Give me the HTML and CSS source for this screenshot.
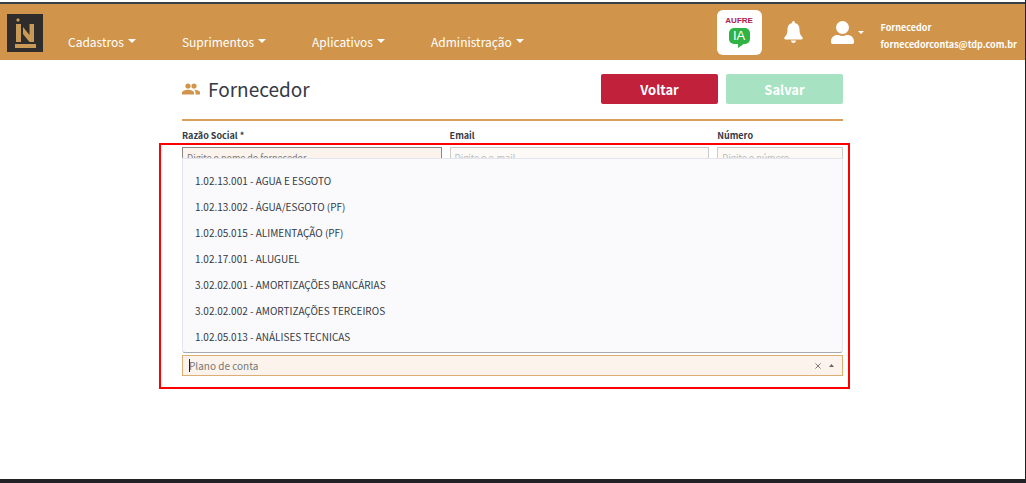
FILE: index.html
```html
<!DOCTYPE html>
<html lang="pt-BR">
<head>
  <meta charset="UTF-8">
  <meta name="viewport" content="width=device-width, initial-scale=1.0">
  <title>Fornecedor</title>
  <link rel="stylesheet" href="styles.css">
</head>
<body>
  <!-- Top navigation -->
  <header class="navbar">
    <a class="logo" href="#" aria-label="Início">
      <svg width="36" height="38" viewBox="0 0 36 38">
        <rect width="36" height="38" fill="#2e2d2c"/>
        <path d="M11 4l2 2-2 2-2-2zM9 10h5v18H9zM16 13l6.500 8V10H27v18h-4.500L16 20zM8 30h21v4H8z" fill="#c99a55"/>
      </svg>
    </a>
    <nav class="menu">
      <button type="button" class="menu-item">Cadastros <span class="caret"></span></button>
      <button type="button" class="menu-item">Suprimentos <span class="caret"></span></button>
      <button type="button" class="menu-item">Aplicativos <span class="caret"></span></button>
      <button type="button" class="menu-item">Administração <span class="caret"></span></button>
    </nav>
    <div class="tools">
      <a class="aufre" href="#">
        <span class="aufre-name">AUFRE</span>
        <span class="aufre-ia">IA</span>
      </a>
      <button type="button" class="icon-btn bell" aria-label="Notificações">
        <svg width="19" height="22" viewBox="0 0 19 22" fill="#fff">
          <path d="M9.500 0c.8 0 1.300.6 1.300 1.300v.8c3 .6 4.700 3 4.700 6 0 4.500 1 6.200 2.700 7.800.5.500.6.900.6 1.300 0 .7-.5 1.200-1.300 1.200h-16c-.8 0-1.300-.5-1.300-1.200 0-.4.1-.8.600-1.300C2.500 14.300 3.500 12.600 3.500 8.100c0-3 1.700-5.400 4.700-6v-.8C8.200.6 8.700 0 9.500 0zM7 19.500h5c0 1.400-1.100 2.500-2.500 2.500S7 20.900 7 19.500z"/>
        </svg>
      </button>
      <button type="button" class="icon-btn user" aria-label="Usuário">
        <svg width="23" height="23" viewBox="0 0 23 23" fill="#fff">
          <ellipse cx="11.500" cy="6.500" rx="6.500" ry="6.500"/>
          <path d="M6.500 14h1c2.500 1.200 5.500 1.200 8 0h1c3.500 0 6.500 2.700 6.500 6v1.200c0 1-.8 1.800-1.800 1.800H1.800C.8 23 0 22.200 0 21.200V20c0-3.300 3-6 6.500-6z"/>
        </svg>
        <span class="caret small"></span>
      </button>
      <div class="account">
        <span>Fornecedor</span>
        <span>fornecedorcontas@tdp.com.br</span>
      </div>
    </div>
  </header>

  <main class="content">
    <div class="page-head">
      <svg class="page-icon" width="18" height="12" viewBox="0 0 18 12" fill="#d0954b">
        <circle cx="6" cy="3" r="2.600"/>
        <circle cx="12" cy="3" r="2.600"/>
        <path d="M0 11.500V9.600C0 7.700 3.500 6.700 6 6.700s6 1 6 2.900v1.900zM13.500 11.500V9.600c0-1.200-.6-2.100-1.500-2.800 2.500 0 6 1 6 2.800v1.900z"/>
      </svg>
      <h1>Fornecedor</h1>
      <button type="button" class="btn btn-back">Voltar</button>
      <button type="submit" form="supplierForm" class="btn btn-save">Salvar</button>
    </div>

    <form id="supplierForm" class="form">
      <div class="field wide">
        <label for="razao">Razão Social *</label>
        <input class="required" type="text" id="razao" placeholder="Digite o nome do fornecedor">
      </div>
      <div class="field wide">
        <label for="email">Email</label>
        <input type="email" id="email" placeholder="Digite o e-mail">
      </div>
      <div class="field">
        <label for="numero">Número</label>
        <input type="text" id="numero" placeholder="Digite o número">
      </div>

      <!-- Account plan, the list opens upwards -->
      <div class="combo">
        <ul class="options" id="planos" role="listbox">
          <li role="option">1.02.13.001 - AGUA E ESGOTO</li>
          <li role="option">1.02.13.002 - ÁGUA/ESGOTO (PF)</li>
          <li role="option">1.02.05.015 - ALIMENTAÇÃO (PF)</li>
          <li role="option">1.02.17.001 - ALUGUEL</li>
          <li role="option">3.02.02.001 - AMORTIZAÇÕES BANCÁRIAS</li>
          <li role="option">3.02.02.002 - AMORTIZAÇÕES TERCEIROS</li>
          <li role="option">1.02.05.013 - ANÁLISES TECNICAS</li>
        </ul>
        <span class="cursor"></span>
        <input type="text" id="plano" role="combobox" aria-label="Plano de conta" aria-controls="planos" aria-expanded="true" placeholder="Plano de conta">
        <button type="button" class="combo-btn" aria-label="Limpar">
          <svg width="6" height="6" viewBox="0 0 7 7" stroke="#666" fill="none"><path d="M.5.5l6 6M6.500.5l-6 6"/></svg>
        </button>
        <button type="button" class="combo-btn" aria-label="Fechar">
          <svg width="5" height="3" viewBox="0 0 5 3" fill="#666"><path d="M0 3L2.500 0 5 3z"/></svg>
        </button>
      </div>
      <div class="highlight"></div>
    </form>
  </main>
</body>
</html>
```

FILE: styles.css
```css
* {
  box-sizing: border-box;
}
body {
  margin: 0;
  padding-top: 2px;
  min-height: 100vh;
  display: flex;
  flex-direction: column;
  font-family: "Noto Sans CJK SC", "Open Sans", sans-serif;
  font-size: 11px;
  color: #343a46;
  background: #fff;
  border-right: 1px solid #222;
  border-bottom: 4px solid #222226;
}
button, input {
  font-family: inherit;
}
button {
  border: none;
  padding: 0;
  background: none;
  cursor: pointer;
}

/* Navbar */
.navbar {
  display: flex;
  height: 58px;
  padding: 0 8px 0 7px;
  background: #d0954b;
  border-top: 2px solid #35404a;
}
.logo {
  margin-top: 10px;
  height: 38px;
}
.menu {
  display: flex;
  gap: 46px;
  margin: 26px 0 0 25px;
  height: 22px;
}
.menu-item {
  display: flex;
  align-items: center;
  gap: 4px;
  color: #fff;
  font-size: 12px;
  white-space: nowrap;
}
.caret {
  border: 4px solid transparent;
  border-top-color: #fff;
  border-bottom: 0;
}
.caret.small {
  border-width: 3px;
  border-bottom: 0;
}
.tools {
  display: flex;
  margin-left: auto;
}
.aufre {
  display: flex;
  flex-direction: column;
  align-items: center;
  width: 45px;
  height: 45px;
  margin-top: 6px;
  padding-top: 5px;
  border-radius: 6px;
  background: #fff;
  font-family: "Liberation Sans", sans-serif;
  font-weight: bold;
  text-decoration: none;
}
.aufre-name {
  font-size: 8px;
  line-height: 12px;
  color: #b02050;
}
.aufre-ia {
  position: relative;
  width: 21px;
  height: 16px;
  margin-top: 1px;
  border-radius: 5px;
  background: #2eb344;
  color: #fff;
  font-size: 13px;
  font-weight: normal;
  line-height: 16px;
  text-align: center;
}
.aufre-ia::after {
  content: "";
  position: absolute;
  left: 9px;
  top: 15px;
  border-top: 5px solid #2eb344;
  border-right: 7px solid transparent;
}
.icon-btn {
  display: flex;
  height: 23px;
  margin-top: 17px;
}
.bell {
  margin-left: 22px;
}
.user {
  align-items: center;
  gap: 4px;
  margin-left: 28px;
}
.account {
  display: flex;
  flex-direction: column;
  margin: 15px 0 0 17px;
  color: #fff;
  font-size: 9px;
  font-weight: bold;
  line-height: 17px;
}

/* Page */
.content {
  width: 661px;
  max-width: 100%;
  margin: 0 auto;
  flex: 1;
}
.page-head {
  display: flex;
  align-items: center;
  gap: 8px;
  padding: 14px 0 15px;
  border-bottom: 2px solid #d79f59;
}
h1 {
  flex: 1;
  margin: 0;
  font-size: 19px;
  font-weight: normal;
  line-height: 30px;
}
.btn {
  width: 117px;
  height: 30px;
  border-radius: 2px;
  color: #fff;
  font-size: 13px;
  font-weight: bold;
}
.btn-back {
  background: #c1213b;
}
.btn-save {
  background: #a7e2c2;
}

/* Form */
.form {
  position: relative;
  display: grid;
  grid-template-columns: repeat(5, 1fr);
  column-gap: 8px;
  padding-top: 7px;
}
.wide {
  grid-column: span 2;
}
.field label {
  display: block;
  margin-bottom: 3px;
  font-size: 9px;
  font-weight: bold;
  line-height: 16px;
}
.field input {
  display: block;
  width: 100%;
  height: 20px;
  padding: 0 4px;
  border: 1px solid #ccc;
  background: #fdf9f6;
  font-size: 9px;
}
.field input::placeholder {
  color: #bbb;
}
.field .required {
  border-color: #888;
  background: #fcf3ec;
}
.field .required::placeholder {
  color: #777;
}
.combo {
  position: relative;
  grid-column: 1 / -1;
  display: flex;
  align-items: center;
  gap: 8px;
  height: 21px;
  margin-top: 188px;
  padding: 0 8px 0 6px;
  border: 1px solid #dcae74;
  background: #fcf3ec;
}
.combo input {
  flex: 1;
  min-width: 0;
  padding: 0;
  border: none;
  outline: none;
  background: none;
  font-size: 10px;
}
.combo input::placeholder {
  color: #777;
}
.combo-btn {
  display: flex;
}
.cursor {
  position: absolute;
  left: 6px;
  top: 3px;
  width: 1px;
  height: 13px;
  background: #222;
}
.options {
  position: absolute;
  left: -1px;
  right: -1px;
  bottom: 22px;
  margin: 0;
  padding: 9px 12px 2px;
  list-style: none;
  background: #fafafc;
  border: 1px solid #e4e4ec;
  border-bottom-color: #a5a8ac;
  border-radius: 0 0 3px 3px;
  font-size: 10px;
  line-height: 26px;
}
.highlight {
  position: absolute;
  left: -23px;
  right: -7px;
  top: 22px;
  bottom: -13px;
  border: 2px solid #f00;
  pointer-events: none;
}
```
